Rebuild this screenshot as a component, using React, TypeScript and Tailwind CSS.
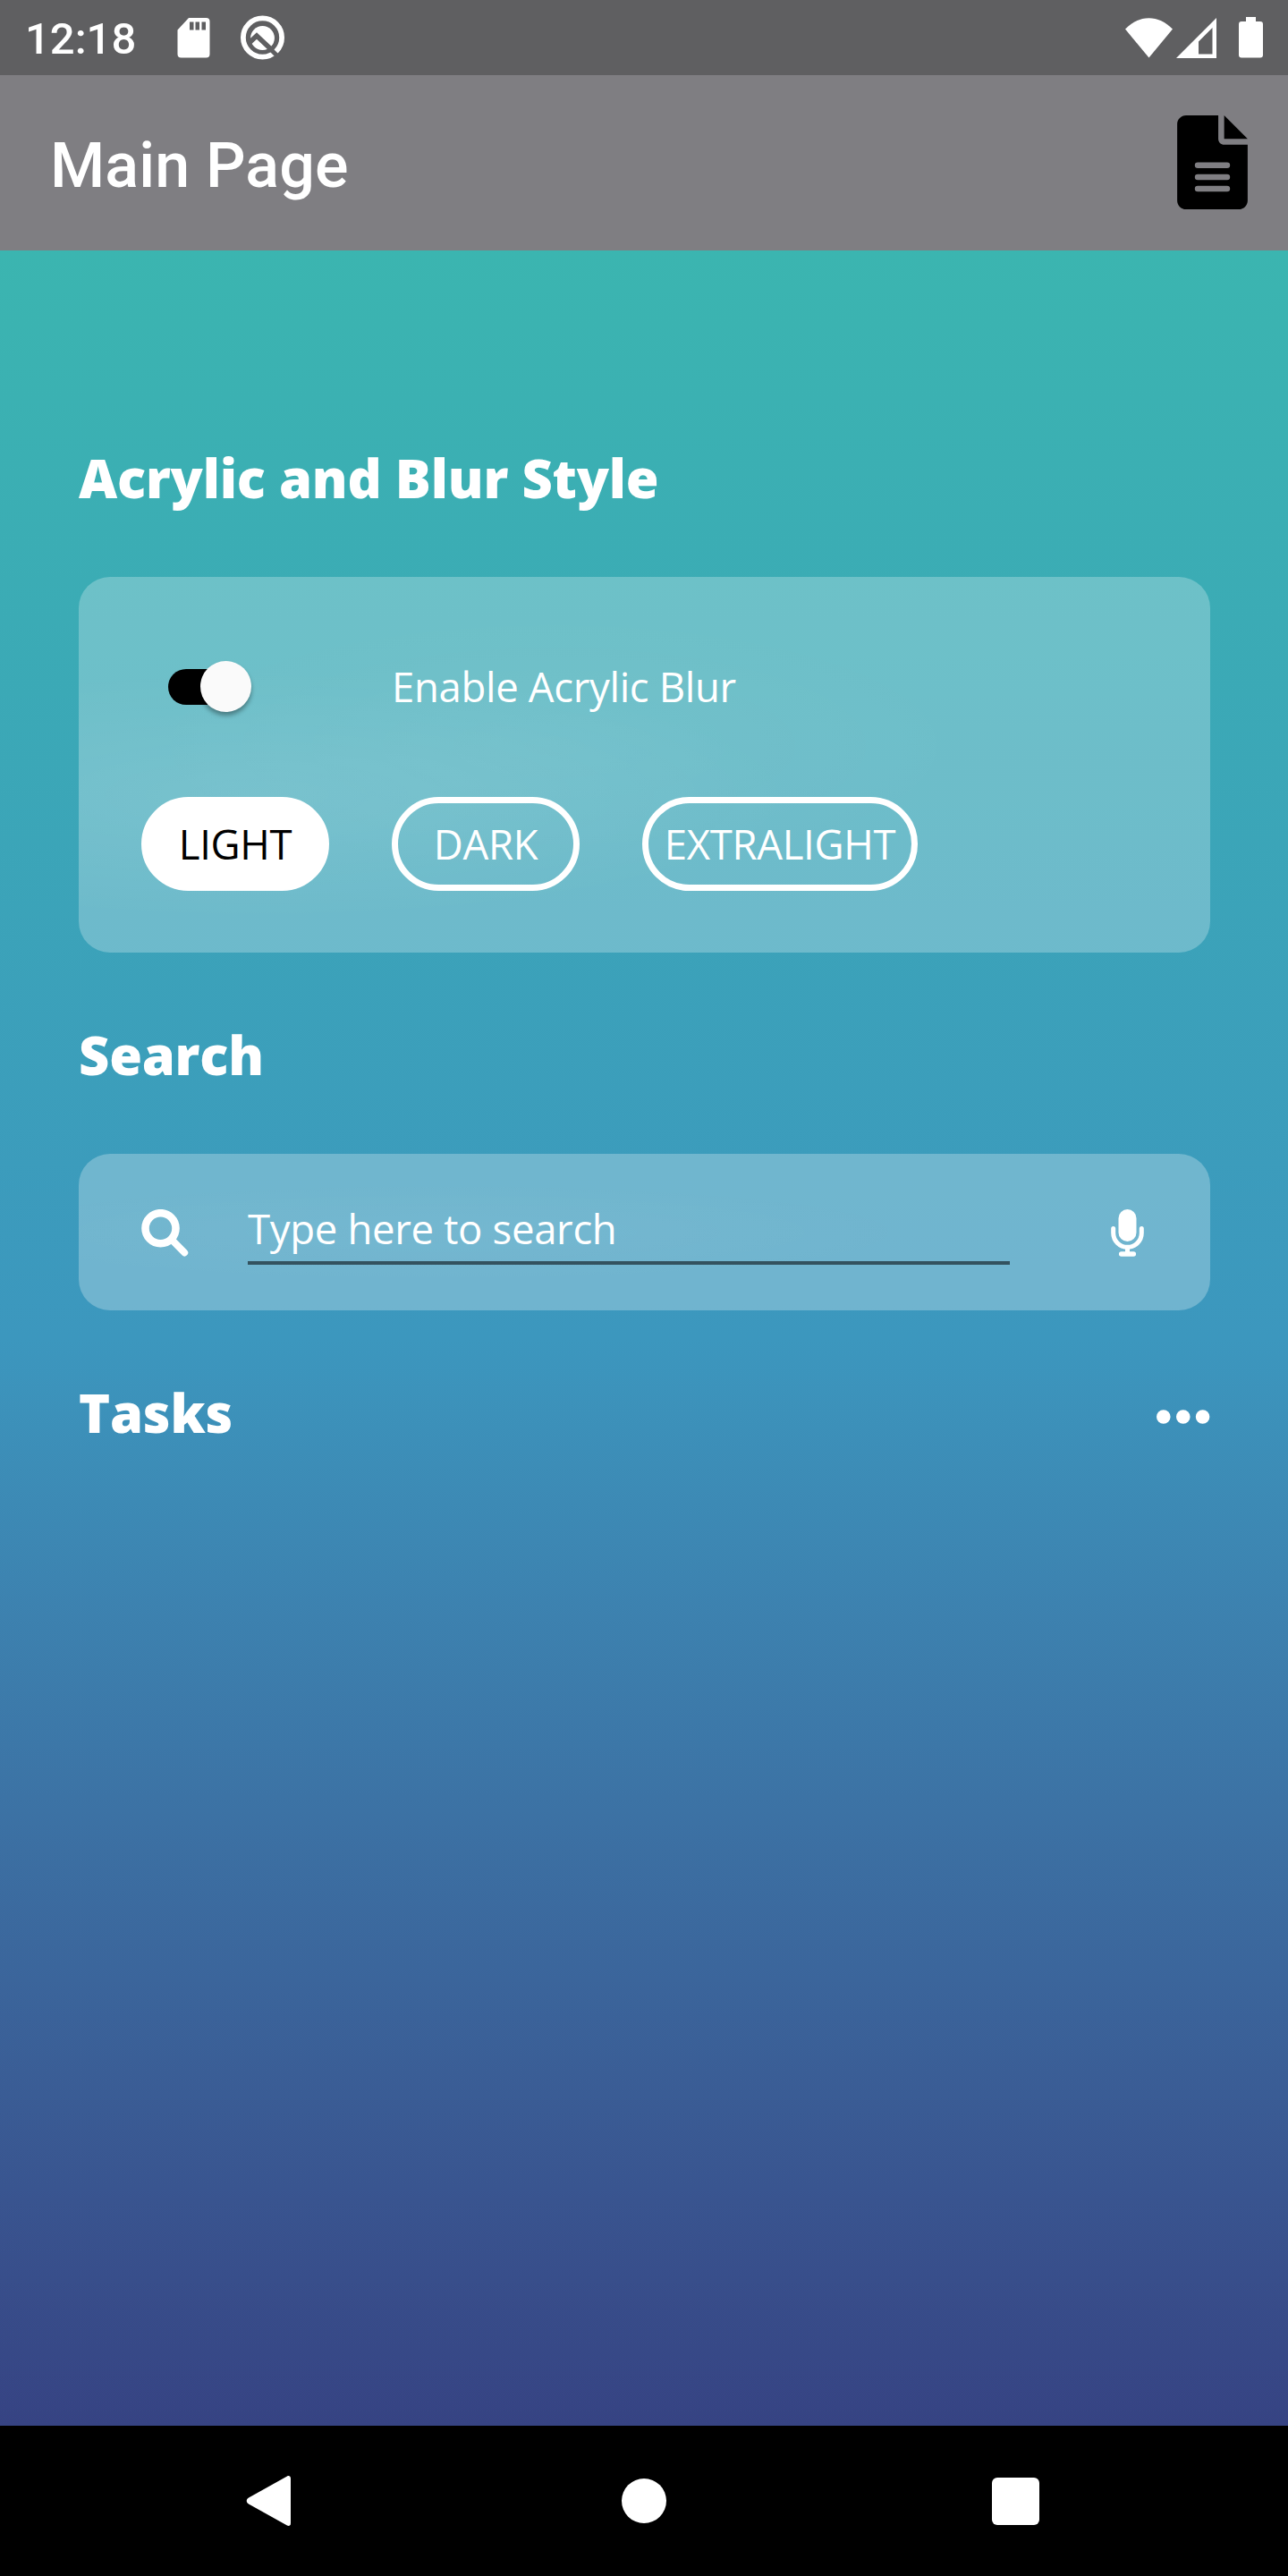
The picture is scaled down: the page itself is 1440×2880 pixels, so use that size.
import type { ReactNode } from "react";

const heading =
  "font-['Open_Sans'] text-[59.5px] font-extrabold leading-[82px] tracking-[-0.2px] text-white";
const body = "font-['Open_Sans'] text-[45.5px] leading-[63px] tracking-[-0.33px]";

function StatusBar() {
  return (
    <div className="flex h-[84px] items-center bg-[#5f5f61] text-white">
      <span className="ml-[28px] w-[126px] whitespace-nowrap pt-[4px] font-[Roboto] text-[49px] font-medium leading-[80px]">
        12:18
      </span>
      <svg className="ml-[44px] h-[45px] w-[37px]" viewBox="0 0 37 45">
        <path
          fill="currentColor"
          fillRule="evenodd"
          d="M13 0h19.500a4 4 0 0 1 4 4v36.500a4 4 0 0 1-4 4H4.500a4 4 0 0 1-4-4V13.500zM14 4.500v9h4.500v-9zM20.500 4.500v9H25v-9zM27.500 4.500v9H32v-9z"
        />
      </svg>
      <svg className="ml-[33px] h-[52px] w-[52px]" viewBox="0 0 52 52">
        <circle cx="25.500" cy="26" r="21.600" fill="none" stroke="currentColor" strokeWidth="5.800" />
        <circle cx="25.500" cy="26.500" r="13.400" fill="currentColor" />
        <g fill="none" stroke="#5f5f61">
          <path d="M10.500 32L19 24L36 40" strokeWidth="5.600" />
          <path d="M34 38.500L43.500 48" strokeWidth="5" />
        </g>
      </svg>
      <div className="grow" />
      <svg className="h-[45px] w-[53px]" viewBox="0 0 53 45">
        <path fill="currentColor" d="M0 12.500C16-4 37-4 53 12.500L26.500 44.500z" />
      </svg>
      <svg className="ml-[4px] h-[45px] w-[45px]" viewBox="0 0 45 45">
        <path fill="currentColor" fillRule="evenodd" d="M45 0v45H0zM40.500 11L25 26.500V40.500h15.500z" />
      </svg>
      <svg className="ml-[25px] mr-[28px] h-[46px] w-[27px]" viewBox="0 0 27 46">
        <path
          fill="currentColor"
          d="M8 0h11v5h5a3 3 0 0 1 3 3v34.500a3 3 0 0 1-3 3H3a3 3 0 0 1-3-3V8a3 3 0 0 1 3-3h5z"
        />
      </svg>
    </div>
  );
}

function AppBar() {
  return (
    <header className="flex h-[196px] items-start justify-between bg-[#7f7e82] pl-[56px] pr-[45px]">
      <h1 className="mt-[60px] font-[Roboto] text-[70px] font-medium leading-[82px] tracking-[0.15px] text-white">
        Main Page
      </h1>
      <svg className="mt-[45px] h-[105px] w-[79px] text-black" viewBox="0 0 384 512">
        <path
          fill="currentColor"
          fillRule="evenodd"
          d="M48 0H224V128c0 17.700 14.300 32 32 32H384V464c0 26.500-21.500 48-48 48H48c-26.500 0-48-21.500-48-48V48C0 21.500 21.500 0 48 0zM256 0L384 128H256zM112 256a16 16 0 0 0 0 32H272a16 16 0 0 0 0-32zM112 320a16 16 0 0 0 0 32H272a16 16 0 0 0 0-32zM112 384a16 16 0 0 0 0 32H272a16 16 0 0 0 0-32z"
        />
      </svg>
    </header>
  );
}

function Toggle() {
  return (
    <div className="flex h-[57px] w-[93px] items-center">
      <div className="flex h-[40px] w-[80px] items-center rounded-full bg-black">
        <div className="ml-[36px] size-[57px] shrink-0 rounded-full bg-[#fafafa] shadow-[0_4px_5px_rgba(0,0,0,0.35)]" />
      </div>
    </div>
  );
}

function Pill({ children, selected, wide }: { children: ReactNode; selected?: boolean; wide?: boolean }) {
  return (
    <button
      className={`${body} flex h-[105px] items-center justify-center rounded-full border-[7px] border-white ${
        wide ? "w-[308px]" : "w-[210px]"
      } ${selected ? "bg-white text-black" : "text-white"}`}
    >
      {children}
    </button>
  );
}

function NavBar() {
  return (
    <nav className="flex h-[168px] items-center bg-black text-white">
      <svg className="ml-[275px] h-[56px] w-[50px]" viewBox="0 0 50 56">
        <path fill="currentColor" d="M50 3v50c0 2.500-2 3.500-4 2.500L3 31.500c-3-1.800-3-5.200 0-7L46 .5c2-1 4 0 4 2.500z" />
      </svg>
      <div className="ml-[370px] size-[50px] rounded-full bg-white" />
      <div className="ml-[363.5px] h-[53px] w-[53px] rounded-[6px] bg-white" />
    </nav>
  );
}

export default function App() {
  return (
    <div className="flex h-[2880px] w-[1440px] flex-col overflow-hidden">
      <StatusBar />
      <AppBar />
      <main className="flex grow flex-col bg-linear-to-b from-[#3bb5b0] via-[#3c97be] to-[#364383] px-[88px] pt-[213px]">
        <h2 className={heading}>Acrylic and Blur Style</h2>

        <section className="mt-[70px] h-[420px] w-[1265px] rounded-[35px] bg-white/26 bg-[radial-gradient(ellipse_at_16%_58%,rgba(255,255,255,0.07),transparent_40%),radial-gradient(ellipse_at_42%_45%,rgba(255,255,255,0.03),transparent_45%)] px-[70px] pt-[91px]">
          <div className="flex h-[63px] items-center pl-[30px]">
            <Toggle />
            <span className={`${body} ml-[157px] text-white`}>Enable Acrylic Blur</span>
          </div>
          <div className="mt-[92px] flex gap-[70px]">
            <Pill selected>LIGHT</Pill>
            <Pill>DARK</Pill>
            <Pill wide>EXTRALIGHT</Pill>
          </div>
        </section>

        <h2 className={`${heading} mt-[73px]`}>Search</h2>

        <section className="mt-[70px] flex h-[175px] w-[1265px] items-start rounded-[35px] bg-white/27 bg-[radial-gradient(ellipse_at_32%_50%,rgba(255,255,255,0.03),transparent_45%)]">
          <svg className="ml-[70px] mt-[62px] h-[53px] w-[53px] text-white" viewBox="0 0 53 53">
            <g fill="none" stroke="currentColor" strokeLinecap="round">
              <circle cx="21.500" cy="21.200" r="17" strokeWidth="8.600" />
              <path d="M34 34l14.300 14.500" strokeWidth="7.800" />
            </g>
          </svg>
          <div className="ml-[66px] mt-[53px] h-[71px] w-[852px] border-b-4 border-[#33525f]">
            <span className={`${body} -mt-px block text-white`}>Type here to search</span>
          </div>
          <svg className="ml-[113px] mt-[62px] h-[53px] w-[37px] text-white" viewBox="0 0 37 53">
            <g fill="none" stroke="currentColor" strokeLinecap="round">
              <path d="M2.700 21.500v5a15.800 15.800 0 0 0 31.600 0v-5" strokeWidth="5" />
              <path d="M18.500 43v6" strokeWidth="5" />
              <path d="M11.700 50h13.600" strokeWidth="5.500" />
            </g>
            <rect x="8.500" y="0" width="20" height="36" rx="10" fill="currentColor" />
          </svg>
        </section>

        <div className="mt-[73px] flex w-[1265px] items-center justify-between">
          <h2 className={heading}>Tasks</h2>
          <svg className="mt-[10px] h-[16px] w-[60px]" viewBox="0 0 60 16">
            <g fill="white">
              <circle cx="7.800" cy="8" r="7.800" />
              <circle cx="29.800" cy="8" r="7.800" />
              <circle cx="51.600" cy="8" r="7.800" />
            </g>
          </svg>
        </div>
      </main>
      <NavBar />
    </div>
  );
}
